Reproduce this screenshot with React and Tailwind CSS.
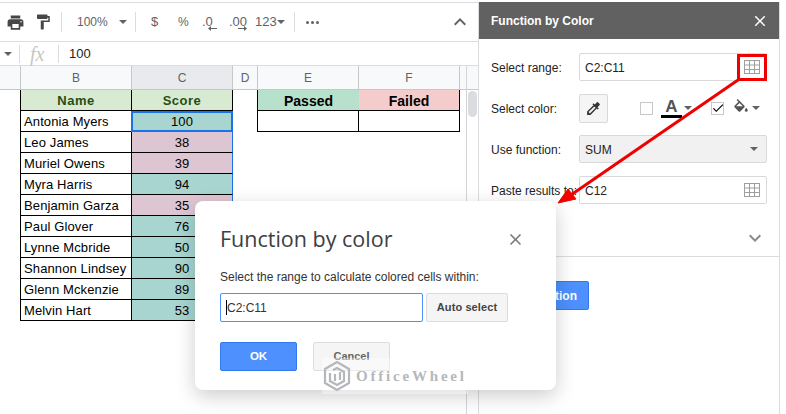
import { MdPrint, MdFormatPaint, MdKeyboardArrowUp, MdColorize, MdClose, MdCheck, MdKeyboardArrowDown } from 'react-icons/md';

const scores = [
  ['Antonia Myers', 100, 'teal'],
  ['Leo James', 38, 'pink'],
  ['Muriel Owens', 39, 'pink'],
  ['Myra Harris', 94, 'teal'],
  ['Benjamin Garza', 35, 'pink'],
  ['Paul Glover', 76, 'teal'],
  ['Lynne Mcbride', 50, 'teal'],
  ['Shannon Lindsey', 90, 'teal'],
  ['Glenn Mckenzie', 89, 'teal'],
  ['Melvin Hart', 53, 'teal'],
];

function Caret({ className = '' }) {
  return <span className={`w-0 h-0 border-x-[4px] border-x-transparent border-t-[4px] border-t-[#5f6368] ${className}`} />;
}

function Sep() {
  return <span className="block w-px h-[20px] bg-[#dadce0]" />;
}

function GridIcon() {
  return (
    <svg width="16" height="16" viewBox="0 0 16 16" fill="none" stroke="#9e9e9e" strokeWidth="1">
      <rect x="0.5" y="1.5" width="15" height="13" />
      <path d="M0.5 6h15M0.5 10.5h15M5.5 1.5v13M10.5 1.5v13" />
    </svg>
  );
}

function DecArrow({ right }) {
  return (
    <svg className="absolute top-[13px]" style={{ left: right ? 9 : 6 }} width="9" height="7" viewBox="0 0 9 7" fill="#5f6368">
      <path d={right ? 'M0 3h6V1l3 2.5L6 6V4H0z' : 'M9 3H3V1L0 3.5 3 6V4h6z'} />
    </svg>
  );
}

function Toolbar() {
  return (
    <div className="h-[39px] border-b border-[#dadce0] flex items-center text-[#5f6368] text-[12px] relative">
      <MdPrint size={19} className="ml-[6px] text-[#444746]" />
      <MdFormatPaint size={18} className="ml-[9px] text-[#444746]" />
      <span className="ml-[9px]"><Sep /></span>
      <span className="ml-[15px] w-[30px]">100%</span>
      <Caret className="ml-[12px]" />
      <span className="ml-[8px]"><Sep /></span>
      <span className="ml-[15px] w-[8px] text-[13px]">$</span>
      <span className="ml-[19px] w-[10px]">%</span>
      <span className="ml-[14px] w-[11px] relative text-[13px]">
        .0
        <DecArrow />
      </span>
      <span className="ml-[16px] w-[17px] relative text-[13px]">
        .00
        <DecArrow right />
      </span>
      <span className="ml-[9px] text-[13px] w-[22px]">123</span>
      <Caret />
      <span className="ml-[9px]"><Sep /></span>
      <span className="ml-[11px] flex gap-[2px]">
        <span className="w-[3px] h-[3px] bg-[#5f6368] rounded-full" />
        <span className="w-[3px] h-[3px] bg-[#5f6368] rounded-full" />
        <span className="w-[3px] h-[3px] bg-[#5f6368] rounded-full" />
      </span>
      <MdKeyboardArrowUp size={24} className="ml-auto mr-[6px] text-[#5f6368]" />
    </div>
  );
}

function FormulaBar() {
  return (
    <div className="h-[24px] border-b border-[#dadce0] flex items-center text-[13px] text-[#202124]">
      <Caret className="ml-[4px]" />
      <span className="ml-[7px] w-px h-[18px] bg-[#dadce0]" />
      <span className="ml-[10px] w-[18px] text-[20px] italic text-[#c4c7c5] font-['Liberation_Serif',serif]">fx</span>
      <span className="ml-[10px] w-px h-[18px] bg-[#dadce0]" />
      <span className="ml-[10px]">100</span>
    </div>
  );
}

function ColHead({ label, w, active }) {
  return (
    <div className={`${w} h-full flex items-center justify-center border-r border-[#c7c7c7] ${active ? 'bg-[#e8eaed]' : ''}`}>
      {label}
    </div>
  );
}

function Sheet() {
  return (
    <div className="flex-1 relative min-h-0">
      <div className="h-[24px] flex bg-[#f8f9fa] border-b border-[#c7c7c7] text-[12px] text-[#5f6368]">
        <ColHead label="" w="w-[21px]" />
        <ColHead label="B" w="w-[111px]" />
        <ColHead label="C" w="w-[101px]" active />
        <ColHead label="D" w="w-[25px]" />
        <ColHead label="E" w="w-[101px]" />
        <ColHead label="F" w="w-[101px]" />
        <ColHead label="" w="w-[7px]" />
      </div>
      <div className="flex items-start pl-[20px]">
        <div className="w-[213px] border-l border-black">
          <div className="flex h-[21px] bg-[#d9ead3] text-[#274e13] font-bold text-[13px] tracking-[0.5px] border-b border-black">
            <div className="w-[111px] flex items-center justify-center border-r border-black pt-px">Name</div>
            <div className="w-[101px] flex items-center justify-center border-r border-black pt-px">Score</div>
          </div>
          {scores.map((r, i) => (
            <div key={r[0]} className="flex h-[21px] text-[13px] text-black tracking-[0.12px]">
              <div className="w-[111px] flex items-center pl-[3px] pt-px border-b border-r border-black whitespace-nowrap">{r[0]}</div>
              <div className={`flex items-center justify-center ${r[2] === 'teal' ? 'bg-[#a8d5cf]' : 'bg-[#dec5d2]'} ${i === 0 ? 'w-[102px] -ml-px border-2 border-[#1a73e8]' : 'w-[101px] pt-px border-r border-r-[#1a73e8] border-b border-b-black'}`}>{r[1]}</div>
            </div>
          ))}
        </div>
        <div className="ml-[24px] w-[203px] border-l border-black">
          <div className="flex h-[21px] font-bold text-[14px] text-black border-b border-black">
            <div className="w-[101px] bg-[#b7e1cd] flex items-center justify-center pt-[2px]">Passed</div>
            <div className="w-[101px] bg-[#f4cccc] flex items-center justify-center border-r border-black pt-[2px]">Failed</div>
          </div>
          <div className="flex h-[21px] border-b border-black">
            <div className="w-[101px] border-r border-black" />
            <div className="w-[101px] border-r border-black" />
          </div>
        </div>
      </div>
    </div>
  );
}

function Field({ label, children }) {
  return (
    <div className="flex items-center h-[28px] mb-[13px]">
      <span className="w-[88px] pt-px text-[12px] text-[#222] whitespace-nowrap">{label}</span>
      {children}
    </div>
  );
}

function TextBox({ value }) {
  return (
    <div className="w-[188px] h-[28px] border border-[#d9d9d9] rounded-[2px] flex items-center justify-between pl-[5px] pr-[6px] text-[12px] text-[#222] bg-white">
      <span className="pt-px">{value}</span>
      <GridIcon />
    </div>
  );
}

function BucketIcon() {
  return (
    <svg className="ml-[8px]" width="18" height="18" viewBox="0 0 24 24" fill="#555">
      <path d="M16.56 8.94L7.62 0 6.21 1.41l2.38 2.38-5.15 5.15c-.59.59-.59 1.54 0 2.12l5.5 5.5c.29.29.68.44 1.06.44s.77-.15 1.06-.44l5.5-5.5c.59-.58.59-1.53 0-2.12zM5.21 10L10 5.21 14.79 10H5.21z" />
      <path d="M5 10h10l-5.2 5.5zM19 11.5s-2 2.17-2 3.5c0 1.1.9 2 2 2s2-.9 2-2c0-1.33-2-3.5-2-3.5z" />
    </svg>
  );
}

function Panel() {
  return (
    <div className="w-[302px] border-l border-r border-[#dadce0] flex flex-col mt-[2px]">
      <div className="h-[37px] bg-[#616161] flex items-center justify-between pl-[12px] pr-[10px] text-white font-bold text-[12px]">
        Function by Color
        <MdClose size={18} />
      </div>
      <div className="pt-[14px] pl-[12px] pb-[12px] border-b border-[#dadce0]">
        <Field label="Select range:"><TextBox value="C2:C11" /></Field>
        <Field label="Select color:">
          <div className="w-[29px] h-[29px] border border-[#d9d9d9] bg-[#f5f5f5] rounded-[2px] flex items-center justify-center">
            <MdColorize size={17} className="text-[#333]" />
          </div>
          <span className="ml-[32px] w-[13px] h-[13px] border border-[#c8c8c8]" />
          <span className="ml-[8px] flex flex-col items-center text-[#555] font-bold text-[17px] leading-[16px] w-[21px]">
            A
            <span className="w-[21px] h-[3px] bg-black" />
          </span>
          <Caret className="ml-[2px]" />
          <span className="ml-[19px] w-[13px] h-[13px] border border-[#c8c8c8] flex items-center justify-center">
            <MdCheck size={14} className="text-black shrink-0" />
          </span>
          <BucketIcon />
          <Caret className="ml-[2px]" />
        </Field>
        <Field label="Use function:">
          <div className="w-[188px] h-[28px] border border-[#d9d9d9] rounded-[2px] flex items-center justify-between pl-[5px] pr-[8px] text-[12px] text-[#222] bg-[#f1f1f1]">
            <span className="pt-px">SUM</span>
            <Caret />
          </div>
        </Field>
        <Field label="Paste results to:"><TextBox value="C12" /></Field>
        <div className="flex justify-end pr-[12px] pt-[9px] h-[27px]">
          <MdKeyboardArrowDown size={24} className="text-[#8a8a8a]" />
        </div>
      </div>
      <div className="pl-[12px] pt-[24px]">
        <button className="w-[98px] h-[29px] bg-[#4d90fe] border border-[#3079ed] rounded-[2px] text-white font-bold text-[12px]">
          Run function
        </button>
      </div>
    </div>
  );
}

function Dialog() {
  return (
    <div className="absolute left-[195px] top-[201px] w-[361px] h-[189px] bg-white rounded-[8px] shadow-[0_6px_20px_rgba(0,0,0,0.2)] pl-[25px] pt-[22px] pr-[31px]">
      <div className="flex items-center justify-between h-[33px]">
        <span className="text-[21.5px] text-[#3c4043] font-['Open_Sans',sans-serif]">Function by color</span>
        <MdClose size={19} className="text-[#777]" />
      </div>
      <p className="mt-[12px] text-[12px] text-[#333]">Select the range to calculate colored cells within:</p>
      <div className="mt-[7px] flex gap-[3px]">
        <div className="w-[203px] h-[29px] border border-[#4d90fe] rounded-[2px] flex items-center pl-[5px] text-[12px] text-[#333]">
          <span className="w-px h-[15px] bg-black" />
          C2:C11
        </div>
        <button className="w-[82px] h-[29px] border border-[#dcdcdc] bg-[#f5f5f5] rounded-[2px] text-[11px] tracking-[0.1px] font-bold text-[#444] shrink-0">Auto select</button>
      </div>
      <div className="mt-[20px] flex gap-[16px]">
        <button className="w-[77px] h-[29px] bg-[#4d90fe] border border-[#3079ed] rounded-[2px] text-white font-bold text-[11.5px]">OK</button>
        <button className="w-[77px] h-[29px] border border-[#dcdcdc] bg-[#f5f5f5] rounded-[2px] text-[11px] font-bold text-[#666]">Cancel</button>
      </div>
    </div>
  );
}

function Watermark() {
  return (
    <div className="absolute left-[322px] top-[358px] w-[146px] h-[36px] bg-white/40 flex items-center">
      <svg width="30" height="32" viewBox="0 0 30 32" fill="none" stroke="#b4b8bd" strokeWidth="2.2">
        <path d="M15 2l12 7v14l-12 7-12-7V9z" />
        <path d="M8 13v8l7 4 7-4v-9l-7-4-4 2" />
        <path d="M13 14v7M18 12v8" />
      </svg>
      <span className="ml-[4px] text-[15px] font-bold tracking-[2.8px] text-[#b4b8bd] font-['Liberation_Serif',serif]">OfficeWheel</span>
    </div>
  );
}

export default function App() {
  return (
    <div className="relative w-[786px] h-[414px] overflow-hidden bg-white flex font-['Liberation_Sans',Arial,sans-serif]">
      <div className="w-[478px] flex flex-col">
        <div className="h-[3px] border-b border-[#dadce0]" />
        <Toolbar />
        <FormulaBar />
        <Sheet />
      </div>
      <Panel />

      {/* scrollbar track */}
      <div className="absolute left-[466px] top-[66px] w-px h-[348px] bg-[#d5d5d5]" />
      <div className="absolute left-[468px] top-[91px] w-[9px] h-[26px] rounded-full bg-[#dadce0]" />

      {/* annotation: red box and arrow */}
      <div className="absolute left-[737px] top-[54px] w-[30px] h-[27px] border-[3px] border-[#f00000]" />
      <svg className="absolute left-0 top-0" width="786" height="414">
        <path d="M738 80L568 197" stroke="#f00000" strokeWidth="3" />
        <path d="M558 203L568 189L576 199z" fill="#f00000" stroke="#f00000" />
      </svg>

      <Dialog />
      <Watermark />
    </div>
  );
}
